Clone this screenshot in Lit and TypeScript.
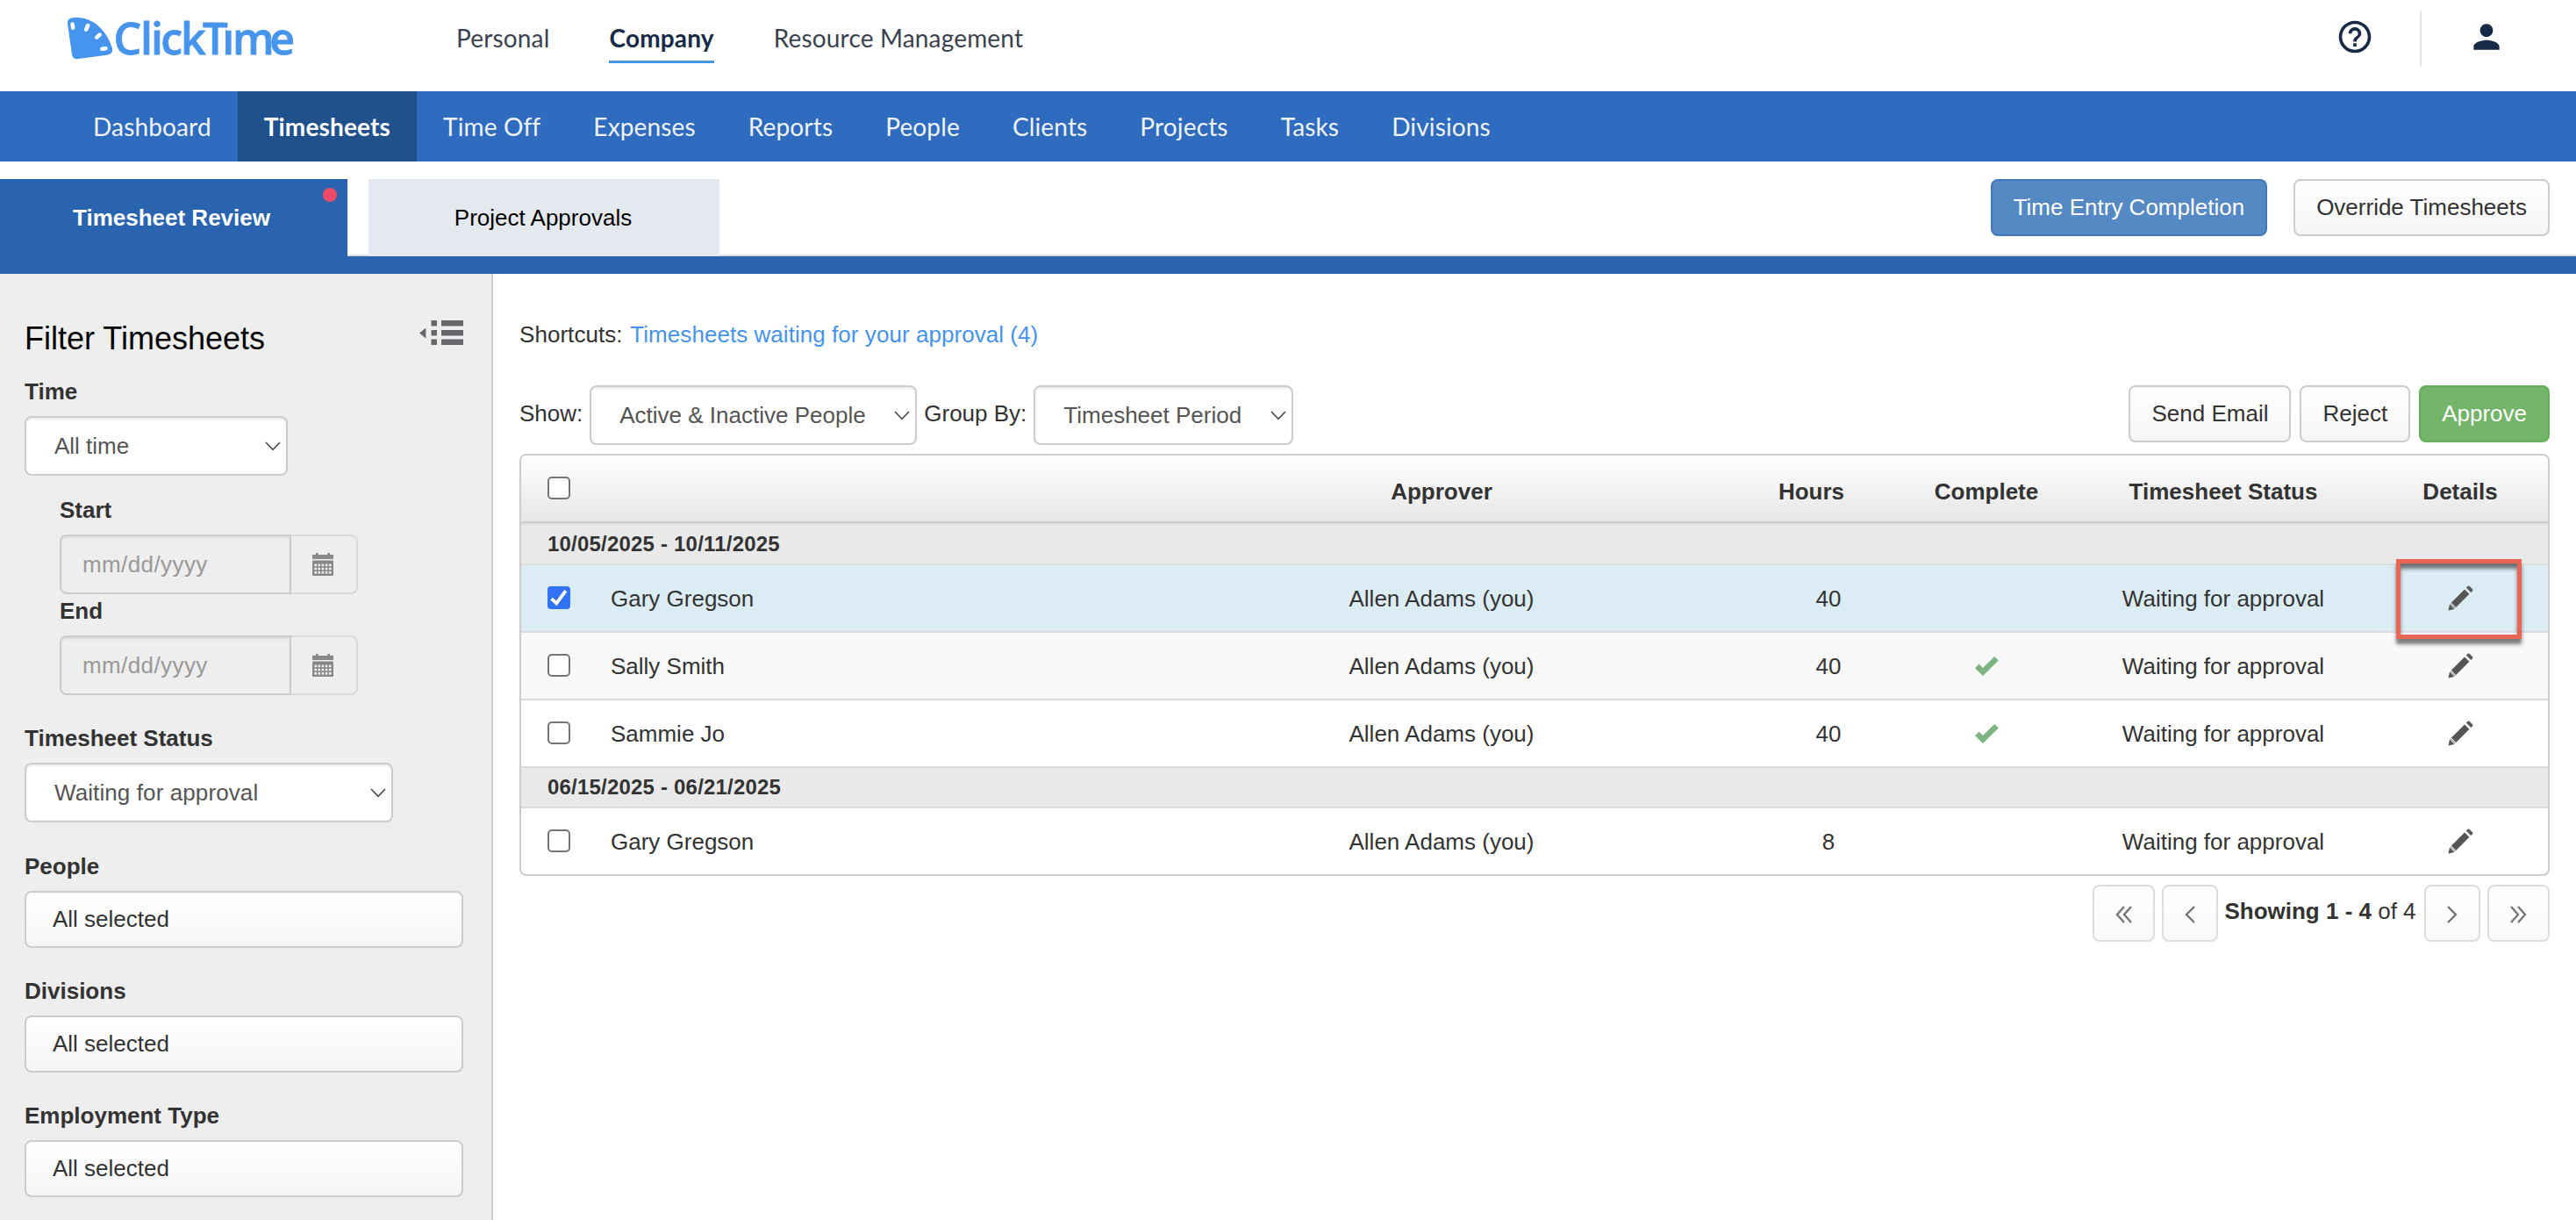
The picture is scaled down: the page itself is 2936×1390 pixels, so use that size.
/**
 * Company timesheet review page: top navigation, filter sidebar and
 * the approval table.
 */

import { LitElement, html, css, svg, nothing } from "lit";
import { customElement, property, state } from "lit/decorators.js";
import { classMap } from "lit/directives/class-map.js";

interface TimesheetRow {
	name: string;
	approver: string;
	hours: number;
	complete: boolean;
	status: string;
	checked?: boolean;
	marked?: boolean;
}

interface Period {
	label: string;
	rows: TimesheetRow[];
}

const NAV = [
	"Dashboard",
	"Timesheets",
	"Time Off",
	"Expenses",
	"Reports",
	"People",
	"Clients",
	"Projects",
	"Tasks",
	"Divisions",
];

const APPROVER = "Allen Adams (you)";
const WAITING = "Waiting for approval";

const PERIODS: Period[] = [
	{
		label: "10/05/2025 - 10/11/2025",
		rows: [
			{ name: "Gary Gregson", approver: APPROVER, hours: 40, complete: false, status: WAITING, checked: true, marked: true },
			{ name: "Sally Smith", approver: APPROVER, hours: 40, complete: true, status: WAITING },
			{ name: "Sammie Jo", approver: APPROVER, hours: 40, complete: true, status: WAITING },
		],
	},
	{
		label: "06/15/2025 - 06/21/2025",
		rows: [{ name: "Gary Gregson", approver: APPROVER, hours: 8, complete: false, status: WAITING }],
	},
];

const logo = html`
	<svg class="logo" width="270" height="76" viewBox="0 0 270 76" role="img" aria-label="ClickTime">
		<path
			d="M2 27 Q1 21 8 20.3 C30 17 47 35 53 55 Q54 61 48 62.5 L13 67.3 Q8 67.5 7 62 Z"
			fill="#4794ed"
		/>
		<g stroke="#fff" stroke-width="4.6" stroke-linecap="round">
			<path d="M7.6 27.6 L8.1 31.8" />
			<path d="M25.2 29.2 L23.2 33.6" />
			<path d="M38.6 39.6 L35.2 42.6" />
			<path d="M45.4 55.2 L41.4 55.8" />
		</g>
		<text class="wordmark" y="61.6" x="54.5 85 97 108.3 131 156 178.3 190 232.3">ClickTime</text>
		<!-- the T bar runs over the second i, which carries no dot -->
		<rect x="184.5" y="20" width="8" height="14.6" fill="#fff" />
		<rect x="180" y="18" width="12" height="7.8" fill="#fff" />
	</svg>
`;

const helpIcon = html`
	<svg width="44" height="44" viewBox="0 0 24 24" fill="#172b48">
		<path
			d="M11 18h2v-2h-2v2zm1-16C6.48 2 2 6.48 2 12s4.48 10 10 10 10-4.48 10-10S17.52 2 12 2zm0 18c-4.41 0-8-3.59-8-8s3.59-8 8-8 8 3.59 8 8-3.59 8-8 8zm0-14c-2.21 0-4 1.79-4 4h2c0-1.1.9-2 2-2s2 .9 2 2c0 2-3 1.75-3 5h2c0-2.25 3-2.5 3-5 0-2.21-1.79-4-4-4z"
		/>
	</svg>
`;

const personIcon = html`
	<svg width="44" height="44" viewBox="0 0 24 24" fill="#172b48">
		<path
			d="M12 12c2.21 0 4-1.79 4-4s-1.79-4-4-4-4 1.79-4 4 1.79 4 4 4zm0 2c-2.67 0-8 1.34-8 4v2h16v-2c0-2.66-5.33-4-8-4z"
		/>
	</svg>
`;

const collapseIcon = html`
	<svg width="50" height="28" viewBox="0 0 50 28" fill="#67686d">
		<path d="M0 14.5 L7.4 8.6 V20.4 Z" />
		<rect x="13.5" y="0" width="6.5" height="6.5" />
		<rect x="13.5" y="11" width="6.5" height="6.5" />
		<rect x="13.5" y="21.5" width="6.5" height="6.5" />
		<rect x="25" y="0" width="25" height="6.5" />
		<rect x="25" y="11" width="25" height="6.5" />
		<rect x="25" y="21.5" width="25" height="6.5" />
	</svg>
`;

const chevronDown = html`
	<svg class="chevron" width="18" height="11" viewBox="0 0 18 11" fill="none" stroke="#4a4a4a" stroke-width="1.6">
		<path d="M1 1 L9 9.4 L17 1" />
	</svg>
`;

const calendarIcon = html`
	<svg width="24" height="26" viewBox="0 0 24 26" fill="#888">
		<path d="M0 2h4V0h2.6v2h10.8V0H20v2h4v5H0z" />
		<rect x="0" y="8.5" width="24" height="17.5" rx="1" />
		<g fill="#eee">
			${[12.6, 16.8, 21].map((y) => [2.4, 6.4, 10.6, 14.8, 19].map((x) => svg`<rect x=${x} y=${y} width="2.6" height="2.6" />`))}
		</g>
	</svg>
`;

const pencilIcon = html`
	<svg class="pencil" width="29" height="29" viewBox="0 0 29 29">
		<path d="M0.5 28.5 L2 21.6 L7.4 27 Z" fill="#555" />
		<path d="M3.8 19.6 L19 4.4 L24.4 9.8 L9.2 25 Z" fill="#555" />
		<path d="M20.8 2.6 L22.6 0.8 Q23.6 0 24.6 0.8 L28 4.2 Q28.8 5.2 28 6.2 L26.2 8 Z" fill="#5a5a5a" />
		<path d="M2.8 20.6 L8.2 26" stroke="#9a9a9a" stroke-width="1.2" />
	</svg>
`;

const checkIcon = html`
	<svg width="27" height="22" viewBox="0 0 27 22" fill="#7db47f">
		<path d="M0 13.2 L4.6 8.6 L9 13 L22.2 0 L26.8 4.6 L9 22 Z" />
	</svg>
`;

@customElement("tick-box")
export class TickBox extends LitElement {
	static override styles = css`
		:host {
			display: block;
			width: 26px;
			height: 26px;
		}
		.box {
			box-sizing: border-box;
			width: 26px;
			height: 26px;
			border: 2px solid #767676;
			border-radius: 5px;
			background: #fff;
		}
		svg {
			display: block;
		}
	`;

	@property({ type: Boolean })
	checked = false;

	override render() {
		if (!this.checked) {
			return html`<div class="box"></div>`;
		}
		return html`
			<svg width="26" height="26" viewBox="0 0 26 26">
				<rect width="26" height="26" rx="4" fill="#3273f6" />
				<path d="M4.6 14.2 L10.2 19.4 L20.8 5.2" fill="none" stroke="#fff" stroke-width="3.8" />
			</svg>
		`;
	}
}

@customElement("app-root")
export class AppRoot extends LitElement {
	static override styles = css`
		:host {
			display: flex;
			flex-direction: column;
			width: 2936px;
			height: 1390px;
			overflow: hidden;
			background: #fff;
			color: #333;
			font-family: "Liberation Sans", Arial, sans-serif;
			font-size: 26px;
			line-height: 38px;
			white-space: nowrap;
		}
		* {
			box-sizing: border-box;
		}
		svg {
			display: block;
			flex: none;
		}

		/* top bar */
		.top {
			display: flex;
			flex: none;
			height: 104px;
			padding: 0 80px 0 75px;
			font-family: Lato, sans-serif;
			font-size: 28px;
			letter-spacing: 0.17px;
		}
		.wordmark {
			font-family: "Open Sans", "Noto Sans", sans-serif;
			font-size: 50px;
			font-weight: 600;
			fill: #4794ed;
			stroke: #4794ed;
			stroke-width: 0.8px;
		}
		.areas {
			display: flex;
			gap: 68px;
			margin-left: 175px;
			padding-top: 16px;
			line-height: 55px;
			color: #3b424f;
		}
		.areas span {
			height: 56px;
		}
		.areas .current {
			color: #172b48;
			font-weight: 700;
			border-bottom: 3px solid #4794ed;
		}
		.tools {
			display: flex;
			margin-left: auto;
			padding-top: 12px;
		}
		.tools svg {
			margin-top: 7.5px;
		}
		.rule {
			width: 2px;
			height: 64px;
			margin: 0 52px 0 52px;
			background: #e1e7ec;
		}
		.nav {
			display: flex;
			flex: none;
			height: 80px;
			padding-left: 76px;
			background: #2f6bbf;
			color: #eef3fa;
			font-family: Lato, sans-serif;
			font-size: 28px;
			letter-spacing: 0.15px;
			line-height: 81px;
		}
		.nav span {
			padding: 0 30px;
		}
		.nav .current {
			background: #21518d;
			color: #fff;
			font-weight: 700;
		}

		/* page tabs */
		.tabs {
			display: flex;
			flex: none;
			gap: 24px;
			height: 128px;
			padding-top: 20px;
			padding-right: 30px;
			border-bottom: 20px solid #2a63b0;
			background: linear-gradient(#d9dde1, #d9dde1) bottom / 100% 2px no-repeat;
			color: #000;
			line-height: 88px;
			text-align: center;
		}
		.tab {
			position: relative;
			width: 400px;
			padding-right: 2px;
			background: #e4e8ef;
		}
		.tab.current {
			width: 396px;
			padding-right: 5px;
			background: #2a63b0;
			color: #fff;
			font-weight: 700;
		}
		.dot {
			position: absolute;
			top: 10px;
			right: 12px;
			width: 16px;
			height: 16px;
			border-radius: 50%;
			background: #ee4b6b;
		}
		.page-actions {
			display: flex;
			gap: 30px;
			margin-left: auto;
		}

		.btn {
			height: 65px;
			padding: 0 24px;
			border: 2px solid #ccc;
			border-radius: 8px;
			background: linear-gradient(#fff, #f5f5f5);
			color: #333;
			line-height: 61px;
		}
		.btn.primary {
			border-color: #4379b8;
			background: #5589c4;
			color: #fff;
		}
		.btn.success {
			border-color: #67ad5b;
			background: #73b568;
			color: #fff;
		}

		.body {
			display: flex;
			flex: 1;
			min-height: 0;
		}

		/* filters */
		.sidebar {
			flex: none;
			width: 562px;
			padding: 53px 32px 0 28px;
			border-right: 2px solid #ccc;
			background: #eee;
		}
		.title {
			display: flex;
			justify-content: space-between;
			margin-bottom: 21px;
			color: #000;
			font-size: 36px;
			line-height: 41px;
		}
		.label {
			margin-bottom: 9px;
			font-weight: 700;
		}
		.select {
			display: flex;
			align-items: center;
			justify-content: space-between;
			height: 68px;
			padding: 0 6px 0 32px;
			border: 2px solid #ccc;
			border-radius: 8px;
			background: #fff;
			box-shadow: inset 0 2px 2px rgba(0, 0, 0, 0.075);
			color: #555;
		}
		.select.time {
			width: 300px;
			margin-bottom: 20px;
		}
		.select.status {
			width: 420px;
			margin-bottom: 31px;
			letter-spacing: 0.1px;
		}
		.dates {
			margin: 0 0 30px 40px;
		}
		.date {
			display: flex;
			width: 340px;
			height: 68px;
			color: #999;
		}
		.date-text {
			width: 264px;
			padding-left: 24px;
			border: 2px solid #ccc;
			border-radius: 8px 0 0 8px;
			box-shadow: inset 0 2px 2px rgba(0, 0, 0, 0.075);
			letter-spacing: 0.4px;
			line-height: 64px;
		}
		.date-button {
			display: flex;
			align-items: center;
			justify-content: center;
			flex: 1;
			border: 2px solid #dadada;
			border-left: 0;
			border-radius: 0 8px 8px 0;
			padding-right: 2px;
		}
		.picker {
			margin-bottom: 30px;
			padding: 0 30px;
		}

		/* table area */
		.main {
			flex: 1;
			padding: 50px 30px 0;
		}
		.shortcuts {
			letter-spacing: 0.05px;
		}
		.link {
			margin-left: 1.5px;
			color: #4593ee;
		}
		.toolbar {
			display: flex;
			height: 68px;
			margin: 39px 0 10px;
		}
		.toolbar .caption {
			line-height: 65px;
		}
		.select.people {
			width: 373px;
			margin: 0 8px 0 8px;
		}
		.select.period {
			width: 296px;
			margin-left: 8px;
		}
		.toolbar-actions {
			display: flex;
			gap: 10px;
			margin-left: auto;
		}
		.table {
			border: 2px solid #ccc;
			border-radius: 8px;
			overflow: hidden;
		}
		.row {
			display: grid;
			grid-template-columns: 102px 586px 722px 160px 200px 340px 200px;
			align-items: center;
			justify-items: center;
			height: 77px;
			border-top: 2px solid #ddd;
		}
		.row > :nth-child(-n + 2) {
			justify-self: start;
		}
		.row tick-box {
			margin-left: 30px;
			margin-top: -1px;
		}
		.row.head {
			border-top: 0;
			border-bottom: 2px solid #ccc;
			background: linear-gradient(#fff, #e6e6e6);
			font-weight: 700;
		}
		.row.head span {
			padding-top: 6px;
		}
		.row.head .hours {
			padding-right: 39px;
		}
		.row.alt {
			background: #f9f9f9;
		}
		.row.checked {
			background: #dcecf5;
		}
		.group {
			height: 46px;
			padding-left: 30px;
			border-top: 2px solid #ddd;
			background: #e9e9e9;
			font-size: 24px;
			font-weight: 700;
			letter-spacing: 0.2px;
			line-height: 44px;
		}
		.details {
			position: relative;
		}
		.mark {
			position: absolute;
			top: -30px;
			left: -59px;
			width: 143px;
			height: 91px;
			border: 5px solid #ec6453;
			box-shadow: 0 6px 4px rgba(0, 0, 0, 0.5), inset 0 6px 4px rgba(0, 0, 0, 0.5);
		}

		/* paging */
		.pager {
			display: flex;
			justify-content: flex-end;
			margin-top: 10px;
			line-height: 60px;
		}
		.page-btn {
			display: flex;
			align-items: center;
			justify-content: center;
			width: 64px;
			height: 65px;
			padding-top: 3px;
			border: 2px solid #ddd;
			border-radius: 8px;
			background: linear-gradient(#fff, #f9f9f9);
		}
		.page-btn.wide {
			width: 71px;
		}
		.page-btn + .page-btn {
			margin-left: 8px;
		}
		.showing {
			width: 235px;
			padding-right: 2px;
			text-align: center;
		}
	`;

	@state()
	private section = "Timesheets";

	private renderSelect(value: string, kind: string) {
		return html`<div class="select ${kind}"><span>${value}</span>${chevronDown}</div>`;
	}

	private renderDate(label: string) {
		return html`
			<div class="label">${label}</div>
			<div class="date">
				<div class="date-text">mm/dd/yyyy</div>
				<div class="date-button">${calendarIcon}</div>
			</div>
		`;
	}

	private renderSidebar() {
		return html`
			<div class="sidebar">
				<div class="title"><span>Filter Timesheets</span>${collapseIcon}</div>
				<div class="label">Time</div>
				${this.renderSelect("All time", "time")}
				<div class="dates">${this.renderDate("Start")}${this.renderDate("End")}</div>
				<div class="label">Timesheet Status</div>
				${this.renderSelect(WAITING, "status")}
				${["People", "Divisions", "Employment Type"].map(
					(label) => html`
						<div class="label">${label}</div>
						<div class="btn picker">All selected</div>
					`
				)}
			</div>
		`;
	}

	private renderRow(row: TimesheetRow, index: number) {
		return html`
			<div class=${classMap({ row: true, alt: index % 2 === 1, checked: !!row.checked })}>
				<tick-box ?checked=${row.checked}></tick-box>
				<span>${row.name}</span>
				<span>${row.approver}</span>
				<span>${row.hours}</span>
				<span>${row.complete ? checkIcon : nothing}</span>
				<span>${row.status}</span>
				<div class="details">${pencilIcon}${row.marked ? html`<div class="mark"></div>` : nothing}</div>
			</div>
		`;
	}

	private renderPageButton(paths: string[]) {
		const width = paths.length > 1 ? 19 : 12;
		return html`
			<div class=${classMap({ "page-btn": true, wide: paths.length > 1 })}>
				<svg width=${width} height="20" viewBox="0 0 ${width} 20" fill="none" stroke="#777" stroke-width="2.4">
					${paths.map((d) => svg`<path d=${d} />`)}
				</svg>
			</div>
		`;
	}

	private renderMain() {
		return html`
			<div class="main">
				<div class="shortcuts">Shortcuts: <span class="link">Timesheets waiting for your approval (4)</span></div>
				<div class="toolbar">
					<span class="caption">Show:</span>
					${this.renderSelect("Active & Inactive People", "people")}
					<span class="caption">Group By:</span>
					${this.renderSelect("Timesheet Period", "period")}
					<div class="toolbar-actions">
						<div class="btn">Send Email</div>
						<div class="btn">Reject</div>
						<div class="btn success">Approve</div>
					</div>
				</div>
				<div class="table">
					<div class="row head">
						<tick-box></tick-box>
						<span></span>
						<span>Approver</span>
						<span class="hours">Hours</span>
						<span>Complete</span>
						<span>Timesheet Status</span>
						<span>Details</span>
					</div>
					${PERIODS.map(
						(period) => html`
							<div class="group">${period.label}</div>
							${period.rows.map((row, i) => this.renderRow(row, i))}
						`
					)}
				</div>
				<div class="pager">
					${this.renderPageButton(["M10 1 L2 10 L10 19", "M18 1 L10 10 L18 19"])}
					${this.renderPageButton(["M11 1 L2 10 L11 19"])}
					<div class="showing"><b>Showing 1 - 4</b> of 4</div>
					${this.renderPageButton(["M1 1 L10 10 L1 19"])}
					${this.renderPageButton(["M1 1 L9 10 L1 19", "M9 1 L17 10 L9 19"])}
				</div>
			</div>
		`;
	}

	override render() {
		return html`
			<div class="top">
				${logo}
				<div class="areas">
					<span>Personal</span>
					<span class="current">Company</span>
					<span>Resource Management</span>
				</div>
				<div class="tools">
					${helpIcon}
					<div class="rule"></div>
					${personIcon}
				</div>
			</div>
			<div class="nav">
				${NAV.map((item) => html`<span class=${classMap({ current: item === this.section })}>${item}</span>`)}
			</div>
			<div class="tabs">
				<div class="tab current">Timesheet Review<i class="dot"></i></div>
				<div class="tab">Project Approvals</div>
				<div class="page-actions">
					<div class="btn primary">Time Entry Completion</div>
					<div class="btn">Override Timesheets</div>
				</div>
			</div>
			<div class="body">${this.renderSidebar()}${this.renderMain()}</div>
		`;
	}
}
